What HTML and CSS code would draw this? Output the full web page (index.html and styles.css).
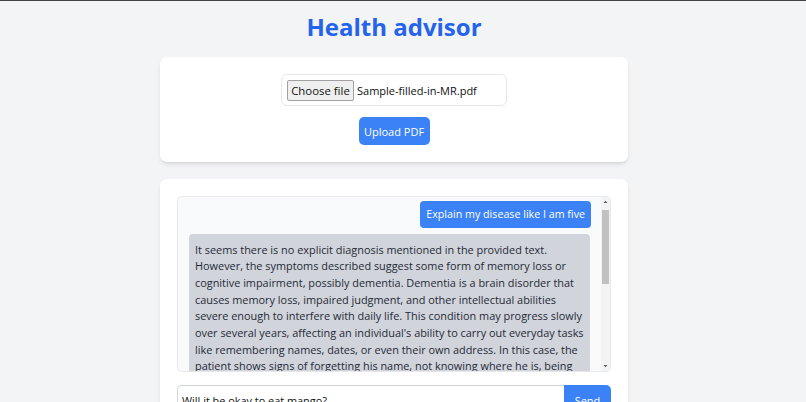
FILE: index.html
```html
<!DOCTYPE html>
<html lang="en">
<head>
<meta charset="utf-8">
<title>Health advisor</title>
<link rel="stylesheet" href="styles.css">
</head>
<body>
<div class="page">
  <div class="container">
    <h1 class="title">Health advisor</h1>

    <section class="card upload-card">
      <div class="file-box">
        <span class="file-btn">Choose file</span>
        <span class="file-name">Sample-filled-in-MR.pdf</span>
      </div>
      <button class="btn upload-btn">Upload PDF</button>
    </section>

    <section class="card chat-card">
      <div class="chat-frame">
        <div class="chat-box">
          <div class="msg msg-user">Explain my disease like I am five</div>
          <div class="msg msg-bot">It seems there is no explicit diagnosis mentioned in the provided text. However, the symptoms described suggest some form of memory loss or cognitive impairment, possibly dementia. Dementia is a brain disorder that causes memory loss, impaired judgment, and other intellectual abilities severe enough to interfere with daily life. This condition may progress slowly over several years, affecting an individual's ability to carry out everyday tasks like remembering names, dates, or even their own address. In this case, the patient shows signs of forgetting his name, not knowing where he is, being unable to recognize familiar people, and having trouble with simple daily activities such as dressing or eating. These symptoms are commonly associated with dementia, and in particular with Alzheimer's disease, which is the most common cause of dementia in older adults. In simple words, it is like your brain is a big library of memories, and some of the books are slowly getting lost, so it becomes harder to remember things you used to know very well. However, please remember that only a doctor can make a proper diagnosis after a careful examination.</div>
        </div>
        <div class="scrollbar" aria-hidden="true">
          <svg class="sb-arrow" width="9" height="10" viewBox="0 0 9 10"><path d="M2.5 6 L4.5 3.8 L6.5 6 Z" fill="#5f5f5f"/></svg>
          <div class="sb-track"><div class="sb-thumb"></div></div>
          <svg class="sb-arrow" width="9" height="10" viewBox="0 0 9 10"><path d="M2.5 4 L4.5 6.2 L6.5 4 Z" fill="#5f5f5f"/></svg>
        </div>
      </div>
      <div class="input-row">
        <input class="chat-input" type="text" value="Will it be okay to eat mango?">
        <button class="btn send-btn">Send</button>
      </div>
    </section>
  </div>
</div>
</body>
</html>
```

FILE: styles.css
```css
html, body {
  margin: 0;
  padding: 0;
  height: 100%;
  overflow: hidden;
}

body {
  background: #f3f4f6;
  border-top: 1px solid #444444;
  box-sizing: border-box;
  font-family: "Open Sans", "Noto Sans", sans-serif;
  color: #1f2937;
}

.page {
  width: 788px;
}

.container {
  width: 468px;
  margin: 0 auto;
  padding-top: 13px;
}

.title {
  margin: 0 0 17px;
  text-align: center;
  font-size: 24px;
  line-height: 26px;
  font-weight: 700;
  color: #2563eb;
}

.card {
  background: #ffffff;
  border-radius: 7px;
  box-shadow: 0 3px 5px -1px rgba(0, 0, 0, 0.1), 0 2px 3px -2px rgba(0, 0, 0, 0.1);
  padding: 17px;
}

.upload-card {
  display: flex;
  flex-direction: column;
  align-items: center;
  gap: 11px;
}

.file-box {
  box-sizing: border-box;
  width: 226px;
  height: 32px;
  padding: 5px;
  border: 1px solid #e5e7eb;
  border-radius: 6px;
  display: flex;
  align-items: center;
  gap: 3px;
  font-size: 11px;
  color: #111111;
}

.file-btn {
  box-sizing: border-box;
  height: 21px;
  width: 67px;
  display: flex;
  align-items: center;
  justify-content: center;
  background: #efefef;
  border: 1px solid #a0a0a0;
  border-radius: 2px;
  font-size: 11.4px;
}

.btn {
  font-family: inherit;
  border: none;
  background: #3b82f6;
  color: #ffffff;
  cursor: pointer;
}

.upload-btn {
  width: 71px;
  height: 28px;
  border-radius: 5px;
  font-size: 11px;
  padding: 0;
}

.chat-card {
  margin-top: 17px;
  height: 240px;
}

.chat-frame {
  position: relative;
  height: 176px;
  border: 1px solid #e5e7eb;
  border-radius: 5px;
  background: #f9fafb;
  box-sizing: border-box;
  overflow: hidden;
}

.chat-box {
  box-sizing: border-box;
  height: 100%;
  padding: 4px 19px 4px 11px;
  overflow: hidden;
  display: flex;
  flex-direction: column;
  align-items: flex-start;
  gap: 6px;
}

.scrollbar {
  position: absolute;
  top: 0;
  right: 0;
  bottom: 0;
  width: 9px;
  display: flex;
  flex-direction: column;
  background: #f3f3f3;
}

.sb-arrow {
  display: block;
  flex-shrink: 0;
}

.sb-track {
  flex: 1;
  padding-top: 3px;
}

.sb-thumb {
  width: 7px;
  height: 74px;
  margin-left: 1px;
  background: #c1c1c1;
}

.msg {
  font-size: 10.9px;
  line-height: 16.67px;
  border-radius: 4px;
  box-sizing: border-box;
}

.msg-user {
  align-self: flex-end;
  background: #3b82f6;
  color: #ffffff;
  padding: 5px 6px;
  font-size: 10.7px;
}

.msg-bot {
  width: 401px;
  background: #d1d5db;
  color: #1f2937;
  padding: 8px 6px 6px;
  flex-shrink: 0;
}

.input-row {
  display: flex;
  margin-top: 13px;
}

.chat-input {
  flex: 1;
  min-width: 0;
  box-sizing: border-box;
  height: 30px;
  border: 1px solid #d1d5db;
  border-right: none;
  border-radius: 5px 0 0 5px;
  padding: 0 4px;
  font-family: inherit;
  font-size: 10.9px;
  color: #111111;
  background: #ffffff;
  outline: none;
}

.send-btn {
  width: 47px;
  height: 30px;
  border-radius: 0 5px 5px 0;
  font-size: 11px;
  padding: 0;
}
```
